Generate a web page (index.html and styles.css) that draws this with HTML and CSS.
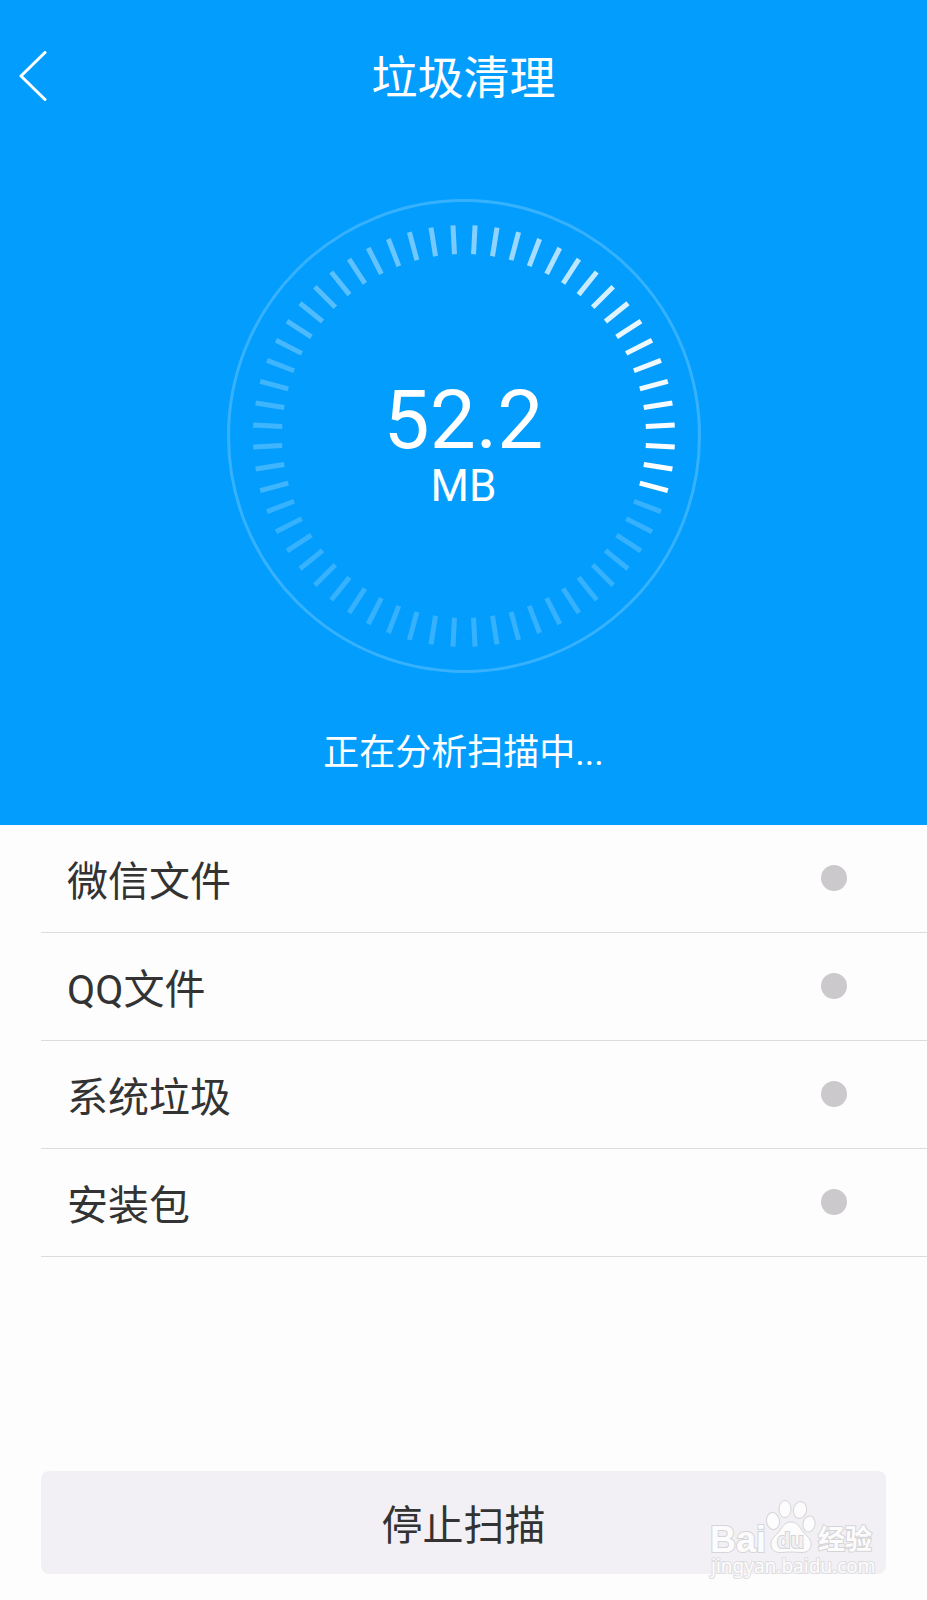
FILE: index.html
```
<!DOCTYPE html>
<html lang="zh-CN">
<head>
    <meta charset="UTF-8">
    <meta name="viewport" content="width=device-width, initial-scale=1.0">
    <title>垃圾清理</title>
    <link rel="stylesheet" href="styles.css">
</head>
<body>
    <header>
        <div class="top-bar">
            <button class="back-button" type="button" aria-label="返回">
                <svg width="28" height="50" viewBox="0 0 28 50"><path d="M26 1.500 L2 25 L26 48.500"/></svg>
            </button>
            <h1>垃圾清理</h1>
        </div>
        <div class="dial">
            <svg viewBox="0 0 474 474">
                <circle class="dial-ring" cx="237" cy="237" r="235.500"/>
                <g id="dial-ticks"></g>
            </svg>
            <div class="dial-value">
                <span class="size">52.2</span>
                <span class="unit">MB</span>
            </div>
        </div>
        <p class="status">正在分析扫描中...</p>
    </header>
    <main>
        <ul class="scan-list">
            <li>微信文件<span class="dot"></span></li>
            <li>QQ文件<span class="dot"></span></li>
            <li>系统垃圾<span class="dot"></span></li>
            <li>安装包<span class="dot"></span></li>
        </ul>
    </main>
    <footer>
        <button class="stop-button" type="button">停止扫描</button>
        <svg class="watermark" width="172" height="84" viewBox="0 0 172 84">
            <text class="brand" x="2" y="52" font-size="36">Bai</text>
            <ellipse cx="65" cy="21" rx="6.500" ry="8.500" transform="rotate(-8 65 21)"/>
            <ellipse cx="77" cy="9" rx="6" ry="8.500"/>
            <ellipse cx="92" cy="10" rx="6.500" ry="8.500" transform="rotate(12 92 10)"/>
            <ellipse cx="101" cy="24" rx="6" ry="8" transform="rotate(10 101 24)"/>
            <path d="M83 22 C76 22 74 28 70 33 C66 37 62 40 63 46 C65 55 74 52 83 52 C92 52 101 55 103 46 C104 40 100 37 96 33 C92 28 90 22 83 22 Z"/>
            <text class="du" x="69" y="48" font-size="22">du</text>
            <text class="brand-cn" x="110" y="49" font-size="27">经验</text>
            <text class="site" x="3" y="73" font-size="19">jingyan.baidu.com</text>
        </svg>
    </footer>

    <script>
        const ticks = document.getElementById('dial-ticks');
        const count = 60;
        const dim = 0.2;

        // brightness falls off counterclockwise from the head of the sweep
        function tickOpacity(i) {
            if (i <= 8) return 1 - i * 0.01;
            if (i <= 18) return 0.92 - (i - 8) * 0.045;
            if (i <= 28) return 0.47 - (i - 18) * 0.02;
            return i < 36 ? 0.24 : dim;
        }

        for (let i = 0; i < count; i++) {
            const line = document.createElementNS('http://www.w3.org/2000/svg', 'line');
            line.setAttribute('x1', 419);
            line.setAttribute('x2', 448);
            line.setAttribute('y1', 237);
            line.setAttribute('y2', 237);
            line.setAttribute('transform', `rotate(${15 - i * 360 / count} 237 237)`);
            line.setAttribute('stroke-opacity', tickOpacity(i));
            ticks.appendChild(line);
        }
    </script>
</body>
</html>
```
FILE: styles.css
```
* {
    box-sizing: border-box;
}
body {
    font-family: Roboto, "Noto Sans CJK SC", sans-serif;
    background-color: #fdfdfd;
    color: #333;
    margin: 0;
    min-height: 100vh;
    display: flex;
    flex-direction: column;
}
header {
    background-color: #039efd;
    color: white;
    height: 825px;
    display: flex;
    flex-direction: column;
    align-items: center;
}
.top-bar {
    width: 100%;
    padding: 44px 19px;
    display: grid;
    grid-template-columns: 28px 1fr 28px;
    align-items: center;
}
.back-button {
    background: none;
    border: none;
    padding: 0 0 4px;
    display: flex;
    cursor: pointer;
}
.back-button path {
    fill: none;
    stroke: white;
    stroke-width: 3;
    stroke-linecap: round;
    stroke-linejoin: round;
}
h1 {
    margin: 0;
    font-size: 46px;
    font-weight: normal;
    line-height: 68px;
    text-align: center;
}
.dial {
    width: 474px;
    max-width: 100%;
    margin-top: 43px;
    display: grid;
    place-items: center;
}
.dial svg,
.dial-value {
    grid-area: 1 / 1;
}
.dial svg {
    width: 100%;
}
.dial-ring {
    fill: none;
    stroke: white;
    stroke-opacity: 0.2;
    stroke-width: 3;
}
#dial-ticks line {
    stroke: white;
    stroke-width: 5;
}
.dial-value {
    padding-top: 16px;
    display: flex;
    flex-direction: column;
    align-items: center;
}
.size {
    font-size: 82px;
    line-height: 84px;
}
.unit {
    font-size: 44px;
    line-height: 48px;
}
.status {
    margin: 54px 0 0;
    font-size: 36px;
    line-height: 52px;
}
.scan-list {
    list-style: none;
    margin: 0;
    padding: 0 0 0 41px;
}
.scan-list li {
    height: 108px;
    padding: 0 80px 2px 26px;
    border-bottom: 1px solid #dcdcdc;
    display: flex;
    justify-content: space-between;
    align-items: center;
    font-size: 41px;
}
.dot {
    width: 26px;
    height: 26px;
    border-radius: 50%;
    background-color: #cbc9cc;
}
footer {
    position: relative;
    margin-top: auto;
    padding: 0 41px 26px;
}
.stop-button {
    width: 100%;
    height: 103px;
    padding: 0 0 2px;
    border: none;
    border-radius: 8px;
    background-color: #f2f0f4;
    color: #333;
    font-family: inherit;
    font-size: 41px;
    cursor: pointer;
}
.watermark {
    position: absolute;
    right: 47px;
    bottom: 16px;
    fill: #fcfcfd;
    stroke: #d5d4d7;
    pointer-events: none;
}
.watermark text {
    font-family: "Liberation Sans", "Noto Sans CJK SC", sans-serif;
    font-weight: bold;
    paint-order: stroke;
    stroke-width: 2;
}
.watermark .du {
    fill: #f2f0f4;
}
.watermark .site {
    font-family: "Noto Sans", sans-serif;
    font-weight: normal;
    stroke: #dedde0;
}
```
